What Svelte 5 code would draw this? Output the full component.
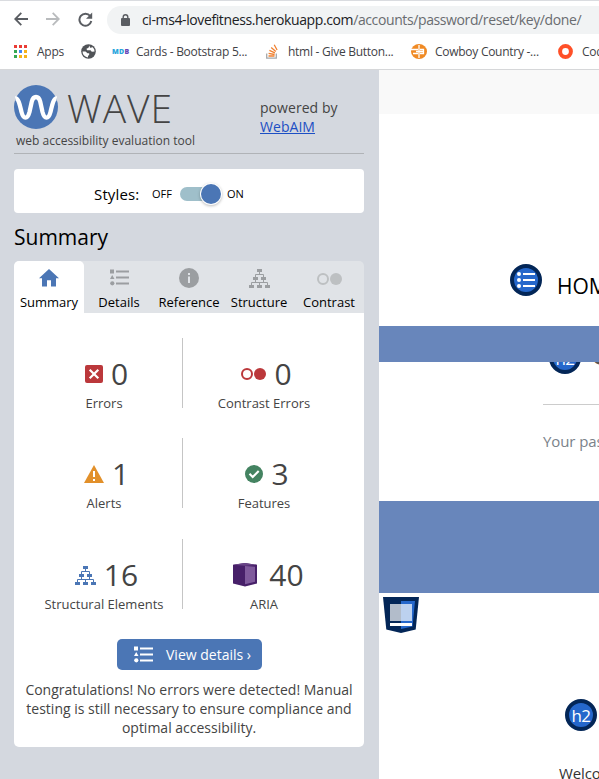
<script>
  const tabs = ['Summary', 'Details', 'Reference', 'Structure', 'Contrast'];
  const stats = [
    [
      { kind: 'error', value: 0, label: 'Errors' },
      { kind: 'contrast', value: 0, label: 'Contrast Errors' }
    ],
    [
      { kind: 'alert', value: 1, label: 'Alerts' },
      { kind: 'feature', value: 3, label: 'Features' }
    ],
    [
      { kind: 'structure', value: 16, label: 'Structural Elements' },
      { kind: 'aria', value: 40, label: 'ARIA' }
    ]
  ];
  const dots = ['#ea3c35', '#ea3c35', '#ea3c35', '#35a853', '#4285f4', '#f5b21b', '#35a853', '#f5b21b', '#f5b21b'];
</script>

{#snippet listIcon()}
  <svg width="19" height="17" viewBox="0 0 19 17" fill="currentColor">
    <path d="M0 .5h4v4H0zM2.200 6l2.300 4H0zM6 1.500h13v2H6zM6 7.500h13v2H6zM6 13.500h13v2H6z" />
    <circle cx="2.300" cy="14.300" r="2.100" />
  </svg>
{/snippet}

{#snippet treeIcon()}
  <svg width="21" height="19" viewBox="0 0 21 19" fill="currentColor">
    <path d="M8 0h5v3H8zM4 8h5v3H4zM12 8h5v3h-5zM0 16h5v3H0zM8 16h5v3H8zM16 16h5v3h-5z" />
    <path d="M10.500 3v2.500M6.500 8V5.500h8V8M6.500 11v2.500M14.500 11v2.500M2.500 16v-2.500h16V16M10.500 13.500V16" fill="none" stroke="currentColor" />
  </svg>
{/snippet}

{#snippet circlesIcon()}
  <svg width="25" height="12" viewBox="0 0 25 12">
    <circle cx="6" cy="6" r="5" fill="none" stroke="currentColor" stroke-width="2" />
    <circle cx="19" cy="6" r="6" fill="currentColor" />
  </svg>
{/snippet}

{#snippet headingBadge()}
  <span class="badge">h2</span>
{/snippet}

<div class="window">
  <header class="chrome">
    <div class="nav">
      <svg class="arrow" width="14" height="14" viewBox="0 0 14 14" fill="none" stroke="#5a5d62" stroke-width="1.800"><path d="M14 7H1.500M7.300.8L1.200 7l6.100 6.200" /></svg>
      <svg class="arrow" width="14" height="14" viewBox="0 0 14 14" fill="none" stroke="#b9bbbd" stroke-width="1.800"><path d="M0 7h12.500M6.700.8L12.800 7l-6.100 6.200" /></svg>
      <svg class="reload" width="15" height="15" viewBox="0 0 15 15"><path d="M12.200 4A6 6 0 1 0 13.300 9" fill="none" stroke="#5a5d62" stroke-width="2" /><path d="M14.200 .5v6.300H8z" fill="#5a5d62" /></svg>
      <div class="address">
        <svg width="9" height="12" viewBox="0 0 9 12"><path d="M2.200 5V3a2.300 2.300 0 0 1 4.600 0v2" fill="none" stroke="#5a5d62" stroke-width="1.400" /><rect y="4" width="9" height="8" rx="1" fill="#5a5d62" /></svg>
        <span class="url">ci-ms4-lovefitness.herokuapp.com<i>/accounts/password/reset/key/done/</i></span>
      </div>
    </div>
    <div class="bookmarks">
      <svg width="13" height="13" viewBox="0 0 13 13">
        {#each dots as color, i}
          <rect x={(i % 3) * 5} y={Math.floor(i / 3) * 5} width="3" height="3" fill={color} />
        {/each}
      </svg>
      <span class="bm apps">Apps</span>
      <svg class="globe" width="15" height="15" viewBox="0 0 15 15"><circle cx="7.500" cy="7.500" r="7.300" fill="#505357" /><path d="M1.500 7.500h3l2 1.800h1.700v1.500L7 12v1.400A6 6 0 0 1 1.500 7.500zM8.300 1.600l-.8 2.200-2 .9.500 1.500h3.500l1.300 1.600 2.800-.2a6 6 0 0 0-2.600-4.800l-.8 1.200-1.200-.4z" fill="#fff" /></svg>
      <span class="mdb"><b>MD</b>B</span>
      <span class="bm cards">Cards - Bootstrap 5...</span>
      <svg class="stack" width="12" height="15" viewBox="0 0 12 15" fill="none"><path d="M.7 9.500v4.700h9.600V9.500" stroke="#a5a8aa" stroke-width="1.300" /><path d="M2.500 12h6M2.600 9.300l6 1.200M3.400 6.300l5.500 2.600M5.200 3.400l4.600 4M8.200.8l2.900 5.200" stroke="#f08030" stroke-width="1.300" /></svg>
      <span class="bm html">html - Give Button...</span>
      <svg class="cowboy" width="16" height="15" viewBox="0 0 16 15"><ellipse cx="8" cy="7.500" rx="8" ry="7.400" fill="#f08a24" /><path d="M0 5.500h7M2 9.500h5M8 1v13M9 5.500h3.500v4H9M5 7.500h8" fill="none" stroke="#fff" stroke-width="1.300" /></svg>
      <span class="bm cowboy-text">Cowboy Country -...</span>
      <svg class="ring" width="15" height="15" viewBox="0 0 15 15"><circle cx="7.500" cy="7.500" r="5.400" fill="none" stroke="#ff5028" stroke-width="4" /></svg>
      <span class="bm code">Cod</span>
    </div>
  </header>

  <div class="content">
    <aside>
      <div class="brand">
        <div class="brand-main">
          <div class="logo-row">
            <svg width="44" height="44" viewBox="0 0 44 44"><circle cx="22" cy="22" r="22" fill="#4b76b5" /><path d="M1.300 13.500C4.800 13 6.200 22 7.500 27c2 7.500 6 7.500 8 0l2.300-10.500c1.500-6 6.900-6 8.400 0L28.500 27c2 7.500 6 7.500 8 0 1.300-5 2.700-14 6.200-13.500" fill="none" stroke="#fff" stroke-width="4.300" /></svg>
            <span class="wave">WAVE</span>
          </div>
          <div class="tagline">web accessibility evaluation tool</div>
        </div>
        <div class="powered">powered by<br /><a href="#webaim">WebAIM</a></div>
      </div>

      <div class="styles">
        <span class="styles-label">Styles:</span>
        <span class="off">OFF</span>
        <span class="switch"><span class="knob"></span></span>
        <span>ON</span>
      </div>

      <h1>Summary</h1>

      <nav class="tabs">
        {#each tabs as tab, i}
          <div class="tab" class:active={i === 0}>
            <span class="tab-icon" class:pale={i === 4}>
              {#if i === 0}
                <svg width="20" height="18" viewBox="0 0 20 18" fill="#4b76b5"><path d="M10 0l10 9.300h-3V17.500h-5V11.300H8v6.200H3V9.300H0z" /></svg>
              {:else if i === 1}
                {@render listIcon()}
              {:else if i === 2}
                <svg width="20" height="20" viewBox="0 0 20 20"><circle cx="10" cy="10" r="10" fill="currentColor" /><path d="M9 5h2v2H9zM9 8.500h2V15H9z" fill="#e0e3e7" /></svg>
              {:else if i === 3}
                {@render treeIcon()}
              {:else}
                {@render circlesIcon()}
              {/if}
            </span>
            <span class="tab-label">{tab}</span>
          </div>
        {/each}
      </nav>

      <section class="panel">
        {#each stats as row}
          <div class="row">
            {#each row as s}
              <div class="cell">
                <div class="count {s.kind}">
                  {#if s.kind === 'error'}
                    <svg width="18" height="18" viewBox="0 0 18 18"><rect width="18" height="18" rx="2" fill="#bb383b" /><path d="M4.700 4.700l8.600 8.600m0-8.600l-8.600 8.600" stroke="#fff" stroke-width="2.200" /></svg>
                  {:else if s.kind === 'contrast'}
                    {@render circlesIcon()}
                  {:else if s.kind === 'alert'}
                    <svg width="20" height="18" viewBox="0 0 20 18"><path d="M10 0l10 18H0z" fill="#e2902a" /><path d="M9 6h2v6H9zM9 14h2v2H9z" fill="#fff" /></svg>
                  {:else if s.kind === 'feature'}
                    <svg width="18" height="18" viewBox="0 0 18 18"><circle cx="9" cy="9" r="9" fill="#448361" /><path d="M4.500 8.800l3.200 3.200 6-6" fill="none" stroke="#fff" stroke-width="2.100" /></svg>
                  {:else if s.kind === 'structure'}
                    {@render treeIcon()}
                  {:else}
                    <svg width="24" height="24" viewBox="0 0 24 24"><path d="M0 1.800L12 0l12 1.800v18.700L12 23.500 0 20.500z" fill="#472069" /><path d="M12 3l10 .8v15L12 21.300z" fill="#7f5a9c" /><path d="M0 1.800L12 0l12 1.800L12 2.700z" fill="#694587" /></svg>
                  {/if}
                  <span>{s.value}</span>
                </div>
                <div class="label">{s.label}</div>
              </div>
            {/each}
          </div>
        {/each}
        <button>{@render listIcon()}<span>View details ›</span></button>
        <p>Congratulations! No errors were detected! Manual<br />testing is still necessary to ensure compliance and<br />optimal accessibility.</p>
      </section>
    </aside>

    <main>
      <div class="topbar"></div>
      <div class="menu">
        <svg width="32" height="32" viewBox="0 0 32 32"><circle cx="16" cy="16" r="14" fill="#2567cb" stroke="#032657" stroke-width="4" /><g fill="#fff"><circle cx="9" cy="10" r="2" /><circle cx="9" cy="16" r="2" /><circle cx="9" cy="22" r="2" /><path d="M13 9h12v2H13zM13 15h12v2H13zM13 21h12v2H13z" /></g></svg>
        <span>HOM</span>
      </div>
      <div class="band"></div>
      <div class="clipped">
        <div class="clipped-inner">{@render headingBadge()}<strong>C</strong></div>
      </div>
      <div class="rule"></div>
      <div class="notice">Your pas</div>
      <div class="band tall"></div>
      <svg class="footer-mark" width="36" height="36" viewBox="0 0 36 36"><path d="M0 0h36l-3.300 32.500L18 36 3.300 32.500z" fill="#032657" /><path d="M18 4h14l-2.500 25.500L18 32z" fill="#2567cb" /><path d="M7 7h11v17H7z" fill="#b2bcca" /><path d="M18 7h11v17H18z" fill="#bcd1ef" /><path d="M7 26h22v3H7z" fill="#fff" /></svg>
      <div class="second">{@render headingBadge()}</div>
      <div class="welcome">Welco</div>
    </main>
  </div>
</div>

<style>
  :global(body) { margin: 0; overflow: hidden; }
  .window { width: 599px; height: 779px; overflow: hidden; background: #fff; font-family: 'Open Sans', sans-serif; color: #000; white-space: nowrap; }
  .window * { box-sizing: border-box; }
  svg { display: block; flex: none; }
  span { flex: none; }

  .chrome { height: 70px; border-top: 1px solid #dadce0; border-bottom: 1px solid #d6d7d9; overflow: hidden; }
  .nav { display: flex; align-items: center; height: 36px; padding-left: 14px; }
  .arrow { margin-right: 18px; }
  .reload { margin-right: 14px; }
  .address { display: flex; align-items: center; width: 520px; height: 28px; flex: none; border-radius: 14px 0 0 14px; background: #f1f3f4; padding-left: 14px; margin-top: 1px; }
  .url { margin-left: 12px; font: 14px 'Open Sans', sans-serif; letter-spacing: -0.39px; color: #202124; }
  .url i { font-style: normal; color: #696c70; }
  .bookmarks { display: flex; align-items: center; height: 28px; padding-left: 14px; font-size: 12px; color: #3f4246; }
  .bm { letter-spacing: -0.27px; }
  .apps { width: 27px; margin-left: 10px; }
  .globe { margin-left: 17px; }
  .mdb { width: 17px; margin-left: 16px; font: 900 7px 'Open Sans', sans-serif; letter-spacing: 0.3px; color: #6848b5; }
  .mdb b { color: #29a5dc; font-weight: 900; }
  .cards { width: 111px; margin-left: 7px; }
  .stack { margin-left: 19px; }
  .html { width: 107px; margin-left: 10px; }
  .cowboy { margin-left: 16px; }
  .cowboy-text { width: 106px; margin-left: 8px; }
  .ring { margin-left: 17px; }
  .code { margin-left: 9px; }

  .content { display: flex; height: 709px; }
  aside { width: 379px; flex: none; padding: 0 15px 0 14px; background: #d4d8df; }
  .brand { display: flex; height: 84px; border-bottom: 1px solid #b0b3b7; color: #444; }
  .brand-main { width: 246px; padding-top: 15px; }
  .logo-row { display: flex; height: 44px; align-items: center; }
  .wave { margin: 1px 0 0 9px; font-size: 39px; line-height: 44px; font-weight: 300; letter-spacing: 0.9px; }
  .tagline { margin: 3px 0 0 2px; font-size: 12px; line-height: 18px; }
  .powered { padding-top: 28px; font-size: 14px; line-height: 19px; letter-spacing: 0.05px; }
  .powered a { color: #1c4fc4; text-decoration: underline; }

  .styles { display: flex; align-items: center; height: 44px; margin-top: 15px; padding: 5px 0 0 80px; border-radius: 4px; background: #fff; font-size: 11px; }
  .styles-label { width: 58px; font-size: 15px; letter-spacing: 0.15px; }
  .off { width: 28px; }
  .switch { display: flex; align-items: center; justify-content: flex-end; width: 41px; height: 14px; margin-right: 6px; border-radius: 7px; background: #9fbfca; }
  .knob { width: 20px; height: 20px; border-radius: 50%; background: #4b76b5; box-shadow: 0 0 0 1px #fff, 0 1px 3px 1px #0004; }
  h1 { margin: 9px 0 9px; font-size: 21px; line-height: 30px; font-weight: 400; }

  .tabs { display: flex; height: 52px; border-radius: 5px 5px 0 0; background: #e0e3e7; }
  .tab { display: flex; flex-direction: column; align-items: center; width: 70px; font-size: 13px; }
  .active { border-radius: 5px 5px 0 0; background: #fff; }
  .tab-icon { display: flex; align-items: center; height: 20px; margin-top: 7px; color: #9b9ea1; }
  .tab:nth-child(2) .tab-icon { position: relative; top: -1px; }
  .pale { color: #bdc0c2; margin-top: 8px; height: 20px; }
  .tab-label { line-height: 18px; margin-top: 5px; }
  .pale + .tab-label { margin-top: 4px; }

  .panel { height: 434px; padding-top: 25px; border-radius: 0 0 5px 5px; background: #fff; color: #444; }
  .row { display: flex; height: 70px; margin: 0 0 30px 10px; }
  .row:nth-child(3) { margin-top: 31px; }
  .cell { width: 162px; text-align: center; font-size: 13px; }
  .cell:first-child { width: 159px; border-right: 1px solid #c5c5c5; padding-left: 2px; }
  .count { display: flex; align-items: center; justify-content: center; height: 52px; padding-top: 20px; gap: 8px; font-size: 30px; line-height: 32px; }
  .count.error, .count.alert { padding-left: 5px; }
  .count.contrast { padding-left: 5px; color: #bb383b; }
  .count.feature { padding-left: 6px; }
  .count.structure { color: #4b76b5; padding-left: 5px; }
  .count.aria { gap: 12px; padding-left: 9px; }
  .count span { color: #444; }
  .label { margin-top: 4px; line-height: 18px; }
  button { display: flex; align-items: center; width: 145px; height: 31px; margin: 0 0 0 103px; padding: 0 0 0 17px; border: 0; border-radius: 5px; background: #4b76b5; color: #fff; font: 14px 'Open Sans', sans-serif; }
  button span { margin-left: 13px; padding-bottom: 1px; }
  p { margin: 10px 0 0; text-align: center; font-size: 14px; line-height: 19px; }

  main { flex: 1; min-width: 0; overflow: hidden; }
  .topbar { height: 44px; background: #f9f9f9; }
  .menu { display: flex; height: 212px; padding: 150px 0 0 131px; font-size: 21px; }
  .menu span { margin-left: 15px; line-height: 44px; height: 40px; }
  .band { height: 36px; background: #6886bb; }
  .clipped { display: flex; align-items: flex-end; height: 12px; overflow: hidden; padding-left: 170px; }
  .clipped-inner { display: flex; align-items: flex-end; gap: 9px; flex: none; height: 32px; }
  .clipped-inner strong { font-size: 32px; font-weight: 600; line-height: 40px; color: #555; margin-bottom: 1px; }
  .badge { display: block; width: 32px; height: 32px; border: 4px solid #032657; border-radius: 50%; background: #2567cb; color: #fff; font-size: 17px; line-height: 25px; text-align: center; letter-spacing: -0.5px; }
  .rule { height: 31px; margin: 0 0 0 164px; border-bottom: 1px solid #ccc; }
  .notice { height: 96px; padding: 24px 0 0 164px; font-size: 15px; line-height: 24px; letter-spacing: -0.1px; color: #7b828a; }
  .band.tall { height: 92px; }
  .footer-mark { margin: 4px 0 0 4px; }
  .second { margin: 66px 0 0 186px; }
  .welcome { margin: 30px 0 0 180px; font-size: 15px; line-height: 24px; letter-spacing: -0.1px; color: #333; }
</style>
